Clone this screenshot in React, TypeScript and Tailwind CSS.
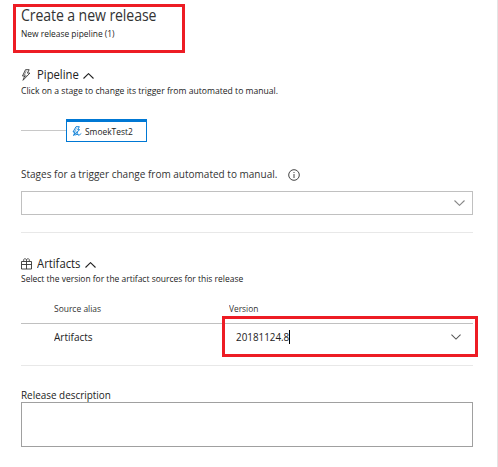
import React from "react";

function Chevron({ className, up = false }: { className: string; up?: boolean }) {
  return (
    <svg className={className} viewBox="0 0 11 6" fill="none" stroke="currentColor" strokeWidth="1.15">
      <path d={up ? "M0.5 5.5 5.5 0.7 10.5 5.5" : "M0.5 0.5 5.5 5.3 10.5 0.5"} />
    </svg>
  );
}

function Bolt() {
  return (
    <svg className="-mt-px h-3 w-[10px] shrink-0 text-[#333]" viewBox="0 0 10 12" fill="none" stroke="currentColor" strokeWidth="0.9" strokeLinejoin="round">
      <path d="M4.500.7h3.700L6.400 4.100h2.500L2 11.300 3.700 7H1.500z" />
      <path d="M5.300 1.800 3.200 6.200h2L4.200 8" strokeWidth="0.500" />
    </svg>
  );
}

function StageBolt() {
  return (
    <svg className="h-[11px] w-[10px] shrink-0 text-[#0078d4]" viewBox="0 0 10 11" fill="none" stroke="currentColor" strokeWidth="0.9" strokeLinejoin="round">
      <path d="M4 .7h3.300L5.700 3.700h1.900L1.500 9.500 3 6H1z" />
      <path d="M4.600 1.800 2.900 5.200h1.800" strokeWidth="0.500" />
      <path d="M5.600 5.800 4.800 8.300l1.900.1M2.500 9.200 5.300 8.300 6.800 9.400 9.300 7.500" strokeWidth="0.800" />
    </svg>
  );
}

function Gift() {
  return (
    <svg className="-mt-px h-3 w-[11px] shrink-0 text-[#333]" viewBox="0 0 11 12" fill="none" stroke="currentColor" strokeWidth="0.9">
      <path d="M.5 3.500h10v7.500H.5zM.5 6.500h10M5.500 3.500V11" />
      <path d="M5.500 3.300V1.800L4.700.8H3.300L2.700 1.600v1.700M5.500 1.800 6.300.8h1.300l.7.8v1.700" strokeWidth="0.800" />
    </svg>
  );
}

export default function App() {
  return (
    <div className="relative h-[467px] w-[498px] overflow-hidden border-r border-[#e4e4e4] bg-white pt-1 pr-6 pl-[21px] font-['Open_Sans','Noto_Sans',sans-serif] whitespace-nowrap text-[#222]">
      <h1 className="h-[22px] origin-left scale-x-[0.88] text-[16px] leading-[22px] tracking-[-0.1px] text-[#333]">Create a new release</h1>
      <p className="mt-px h-[14px] origin-left scale-x-[0.905] text-[9.3px] leading-[14px]">New release pipeline (1)</p>

      <section className="mt-[25px]">
        <h2 className="flex h-[18px] items-center text-[12px] leading-[18px]">
          <Bolt />
          <span className="ml-[6px] w-[41px] origin-left scale-x-[0.94]">Pipeline</span>
          <Chevron up className="mt-[2px] ml-[5px] h-[6px] w-[11px]" />
        </h2>
        <p className="h-[14px] origin-left scale-x-[0.925] text-[9.3px] leading-[14px]">Click on a stage to change its trigger from automated to manual.</p>
        <div className="mt-[21px] flex h-[23px] items-center">
          <div className="h-px w-[45px] bg-[#c8c8c8]" />
          <div className="flex h-[23px] w-[81px] items-center border border-t-[3px] border-[#0078d4] pl-[5px] text-[9.3px]">
            <StageBolt />
            <span className="ml-[3px] origin-left scale-x-[0.905]">SmoekTest2</span>
          </div>
        </div>
      </section>

      <div className="mt-6 flex h-4 items-center text-[11px] leading-4">
        <span className="w-[256px] origin-left scale-x-[0.91] text-[#333]">Stages for a trigger change from automated to manual.</span>
        <svg className="mt-px ml-[11px] size-3 shrink-0" viewBox="0 0 12 12" fill="none" stroke="#444" strokeWidth="1">
          <circle cx="6" cy="6" r="5.300" />
          <path d="M6 5v4M6 3v1" />
        </svg>
      </div>
      <div className="mt-[9px] flex h-6 items-center justify-end border border-[#c0c0c0] pr-[7px] text-[#888]">
        <Chevron className="mb-px h-[6px] w-[11px]" />
      </div>
      <div className="mt-[17px] h-px bg-[#e8e8e8]" />

      <section className="mt-[22px]">
        <h2 className="flex h-[18px] items-center text-[12px] leading-[18px]">
          <Gift />
          <span className="ml-[5px] w-[43px] origin-left scale-x-[0.94]">Artifacts</span>
          <Chevron up className="mt-[2px] ml-[5px] h-[6px] w-[11px]" />
        </h2>
        <p className="-mt-px h-[14px] origin-left scale-x-[0.91] text-[9.3px] leading-[14px]">Select the version for the artifact sources for this release</p>
        <div className="mt-4 grid h-[22px] grid-cols-[175px_1fr] border-b border-[#c0c0c0] pl-[33px] text-[9.3px] leading-[14px] text-[#333]">
          <span className="origin-left scale-x-[0.91]">Source alias</span>
          <span className="origin-left scale-x-[0.9]">Version</span>
        </div>
        <div className="grid h-[42px] grid-cols-[182px_1fr] border-b border-[#e8e8e8] pt-[5px] pl-[33px] text-[11px] leading-4">
          <span className="origin-left scale-x-[0.91]">Artifacts</span>
          <div className="flex h-4 items-center">
            <span className="w-[53px] origin-left scale-x-[0.895]">20181124.8</span>
            <span className="h-[14px] w-px shrink-0 bg-black" />
            <Chevron className="mr-3 ml-auto h-[6px] w-[10px] text-[#555]" />
          </div>
        </div>
      </section>

      <label className="mt-[21px] block h-[15px] origin-left scale-x-[0.9] text-[11px] leading-[15px]" htmlFor="description">Release description</label>
      <textarea id="description" className="block h-[45px] w-full resize-none border border-[#a0a0a0]" />

      <div className="absolute top-1 left-[13px] h-[49px] w-[172px] border-[3px] border-[#ed1c24]" />
      <div className="absolute top-[316px] left-[222px] h-[41px] w-[256px] border-[3px] border-[#ed1c24]" />
    </div>
  );
}
